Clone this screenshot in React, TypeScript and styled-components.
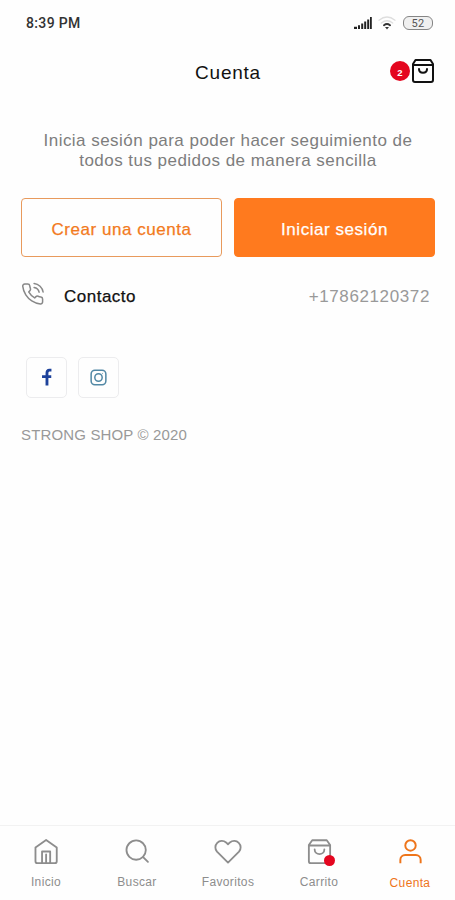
import React from "react";
import styled, { createGlobalStyle } from "styled-components";

const Global = createGlobalStyle`
  * { box-sizing: border-box; }
  body { margin: 0; background: #fefefe; }
  svg { display: block; flex: none; }
`;

const Screen = styled.div`
  width: 455px;
  height: 900px;
  display: flex;
  flex-direction: column;
  overflow: hidden;
  background: #fefefe;
  font-family: "Liberation Sans", Arial, sans-serif;
  color: #111;
`;

const StatusBar = styled.div`
  height: 46px;
  padding: 0 22px 0 26px;
  display: flex;
  align-items: center;
  justify-content: space-between;
`;

const Time = styled.span`
  margin-top: -1px;
  font: 500 14px/16px Roboto, sans-serif;
  letter-spacing: 0.35px;
  color: #333;
`;

const StatusIcons = styled.div`
  display: flex;
  align-items: center;
`;

const Signal = styled.svg`
  margin-right: 6px;
`;

const Wifi = styled.svg`
  margin-right: 7px;
`;

const Battery = styled.div`
  width: 30px;
  height: 14px;
  border: 1.5px solid #858585;
  border-radius: 6px;
  background: #f0f0f0;
  color: #555;
  font: 11px/13px Roboto, sans-serif;
  letter-spacing: 0.3px;
  text-align: center;
`;

const Header = styled.header`
  height: 52px;
  padding: 0 19px 0 20px;
  display: grid;
  grid-template-columns: 1fr auto 1fr;
  align-items: center;
`;

const Title = styled.h1`
  grid-column: 2;
  margin: 2px 0 0;
  font-size: 19px;
  line-height: 24px;
  font-weight: 400;
  letter-spacing: 0.75px;
`;

const CartButton = styled.div`
  justify-self: end;
  display: flex;
  align-items: center;
  margin-top: -2px;
`;

const Count = styled.span`
  width: 20px;
  height: 20px;
  border-radius: 50%;
  background: #e4061f;
  color: #fff;
  font-size: 9.5px;
  font-weight: 700;
  line-height: 23px;
  text-align: center;
`;

const Main = styled.main`
  flex: 1;
  padding: 32px 20px 0 21px;
`;

const Lead = styled.p`
  margin: 0;
  padding-top: 1px;
  font-size: 17px;
  line-height: 20px;
  letter-spacing: 0.47px;
  text-align: center;
  color: #7d7d7d;
`;

const Actions = styled.div`
  display: grid;
  grid-template-columns: 1fr 1fr;
  gap: 12px;
  margin-top: 27px;
`;

const Button = styled.button<{ $filled?: boolean }>`
  height: 59px;
  padding: 5px 0 0;
  border: 1px solid ${(p) => (p.$filled ? "#ff7a1e" : "#e89a5c")};
  border-radius: 4px;
  background: ${(p) => (p.$filled ? "#ff7a1e" : "#fefefe")};
  color: ${(p) => (p.$filled ? "#fff" : "#f27a1d")};
  font: 17px/20px "Liberation Sans", Arial, sans-serif;
  letter-spacing: 0.55px;
  -webkit-text-stroke: 0.25px currentColor;
`;

const Contact = styled.div`
  height: 44px;
  margin-top: 15px;
  padding: 0 5px 0 0;
  display: flex;
  align-items: center;
  font-size: 17px;
  line-height: 20px;
`;

const ContactLabel = styled.span`
  margin: 5px auto 0 19px;
  letter-spacing: 0.5px;
  -webkit-text-stroke: 0.25px currentColor;
`;

const Phone = styled.span`
  margin-top: 5px;
  color: #999;
  letter-spacing: 0.62px;
`;

const Socials = styled.div`
  display: flex;
  gap: 11px;
  margin: 41px 0 0 5px;
`;

const Social = styled.div`
  width: 41px;
  height: 41px;
  display: grid;
  place-items: center;
  border: 1px solid #ececee;
  border-radius: 5px;
`;

const Copyright = styled.p`
  margin: 27px 0 0;
  font-size: 15px;
  line-height: 20px;
  letter-spacing: 0.15px;
  color: #999;
`;

const Nav = styled.nav`
  height: 75px;
  display: grid;
  grid-template-columns: repeat(5, 91px);
  padding-left: 0.5px;
  border-top: 1px solid #f2f2f2;
`;

const Tab = styled.div<{ $active?: boolean }>`
  display: flex;
  flex-direction: column;
  align-items: center;
  padding-top: 12px;
  color: ${(p) => (p.$active ? "#ee751b" : "#8d8d8d")};
  font-size: 12px;
  line-height: 16px;
  letter-spacing: 0.35px;
`;

const IconBox = styled.div`
  position: relative;
  height: 30px;
  margin-bottom: 6px;
`;

const Dot = styled.i`
  position: absolute;
  right: -1px;
  bottom: 2px;
  width: 11px;
  height: 11px;
  border-radius: 50%;
  background: #e4061f;
`;

const Label = styled.span<{ $active?: boolean }>`
  margin-top: ${(p) => (p.$active ? "1px" : "0")};
`;

const line = {
  fill: "none",
  stroke: "currentColor",
  strokeLinecap: "round" as const,
  strokeLinejoin: "round" as const,
};

const HomeIcon = () => (
  <svg width="29" height="29" viewBox="0.4 0 30 30" {...line} strokeWidth="1.9">
    <path d="M4 9.8 15 2l11 7.8V24a2 2 0 0 1-2 2H6a2 2 0 0 1-2-2Z" />
    <path d="M10.8 26V14h8.4v12M15 17v9" />
  </svg>
);

const SearchIcon = () => (
  <svg width="29" height="29" viewBox="0.4 0 30 30" {...line} strokeWidth="1.9">
    <circle cx="14" cy="12.5" r="10" />
    <path d="m21.2 19.7 5 5" />
  </svg>
);

const HeartIcon = () => (
  <svg width="30" height="29" viewBox="0 0 30 30" {...line} strokeWidth="1.9">
    <path d="M15 25.4 3.6 14.1A6.7 6.7 0 0 1 13 4.6L15 6.5l2-1.9A6.7 6.7 0 0 1 26.4 14.1Z" />
  </svg>
);

const BagIcon = () => (
  <svg width="29" height="29" viewBox="0 0 30 30" {...line} strokeWidth="1.9">
    <path d="M4 7.2 7.5 2.3h15L26 7.2V24a2 2 0 0 1-2 2H6a2 2 0 0 1-2-2ZM4 7.8h22M10 11.8c0 6.4 10 6.4 10 0" />
  </svg>
);

const UserIcon = () => (
  <svg width="29" height="29" viewBox="0 0 30 30" {...line} strokeWidth="2" strokeLinecap="butt">
    <circle cx="15" cy="7.7" r="5.4" />
    <path d="M4.5 26v-3.5a5 5 0 0 1 5-5h11a5 5 0 0 1 5 5V26" />
  </svg>
);

const tabs = [
  { label: "Inicio", Icon: HomeIcon },
  { label: "Buscar", Icon: SearchIcon },
  { label: "Favoritos", Icon: HeartIcon },
  { label: "Carrito", Icon: BagIcon, dot: true },
  { label: "Cuenta", Icon: UserIcon, active: true },
];

export default function App() {
  return (
    <>
      <Global />
      <Screen>
        <StatusBar>
          <Time>8:39 PM</Time>
          <StatusIcons>
            <Signal width="18" height="14" viewBox="0 0 18 14" fill="#222">
              <path d="M0 10.8h3V13H0zM4 9.3h2V13H4zM7.2 7.5h2V13h-2zM10.2 5.5h2V13h-2zM13.2 3.5h2V13h-2zM16 1h1.8v12H16z" />
            </Signal>
            <Wifi width="18" height="14" viewBox="0 0 18 14" fill="none" strokeLinecap="round">
              <path d="M1 4.2c5-4 11-4 16 0M3.3 7c3.6-2.8 7.8-2.8 11.4 0" stroke="#dedede" strokeWidth="1.3" />
              <path d="M6 9.2c2-1.5 4-1.5 6 0" stroke="#333" strokeWidth="2" />
              <path d="M7 11h4l-2 2.5Z" fill="#333" />
            </Wifi>
            <Battery>52</Battery>
          </StatusIcons>
        </StatusBar>
        <Header>
          <Title>Cuenta</Title>
          <CartButton>
            <Count>2</Count>
            <svg width="26" height="26" viewBox="0 0 26 26" {...line} strokeWidth="2">
              <path d="M3 6 5.5 2h15L23 6v16a2 2 0 0 1-2 2H5a2 2 0 0 1-2-2ZM3 7h20M9 11c0 5 8 5 8 0" />
            </svg>
          </CartButton>
        </Header>
        <Main>
          <Lead>
            Inicia sesión para poder hacer seguimiento de
            <br />
            todos tus pedidos de manera sencilla
          </Lead>
          <Actions>
            <Button>Crear una cuenta</Button>
            <Button $filled>Iniciar sesión</Button>
          </Actions>
          <Contact>
            <svg width="24" height="24" viewBox="0.4 0 24 24" {...line} stroke="#888" strokeWidth="1.5">
              <path d="M22 16.92v3a2 2 0 0 1-2.18 2 19.79 19.79 0 0 1-8.63-3.07 19.5 19.5 0 0 1-6-6 19.79 19.79 0 0 1-3.07-8.67A2 2 0 0 1 4.11 2h3a2 2 0 0 1 2 1.72c.13.96.36 1.9.7 2.81a2 2 0 0 1-.45 2.11L8.09 9.91a16 16 0 0 0 6 6l1.27-1.27a2 2 0 0 1 2.11-.45c.9.34 1.85.57 2.81.7A2 2 0 0 1 22 16.92Z" />
              <path d="M13.5 1.5a10 10 0 0 1 9 8.5M13.5 5.5a6 6 0 0 1 5 4.7" />
            </svg>
            <ContactLabel>Contacto</ContactLabel>
            <Phone>+17862120372</Phone>
          </Contact>
          <Socials>
            <Social>
              <svg width="19" height="19" viewBox="0 0 20 20" fill="none" stroke="#1d429b" strokeWidth="3">
                <path d="M10.5 18.5V5.3Q10.5 2.2 13 2.2H15.2M5.3 9H15" />
              </svg>
            </Social>
            <Social>
              <svg width="17" height="17" viewBox="0 0 18 18" fill="none" stroke="#5288a5" strokeWidth="1.6">
                <rect x="1.2" y="1.2" width="15.6" height="15.6" rx="4" />
                <circle cx="9" cy="9" r="3.9" />
                <circle cx="13.2" cy="4.8" r=".2" strokeWidth="1" />
              </svg>
            </Social>
          </Socials>
          <Copyright>STRONG SHOP © 2020</Copyright>
        </Main>
        <Nav>
          {tabs.map(({ label, Icon, dot, active }) => (
            <Tab key={label} $active={active}>
              <IconBox>
                <Icon />
                {dot && <Dot />}
              </IconBox>
              <Label $active={active}>{label}</Label>
            </Tab>
          ))}
        </Nav>
      </Screen>
    </>
  );
}
